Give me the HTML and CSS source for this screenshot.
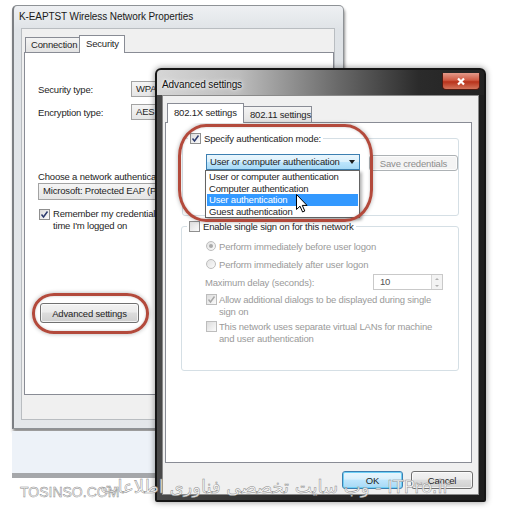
FILE: index.html
```html
<!DOCTYPE html>
<html lang="en">
<head>
    <meta charset="UTF-8">
    <meta name="viewport" content="width=device-width, initial-scale=1.0">
    <title>Advanced settings</title>
    <link rel="stylesheet" href="styles.css">
</head>
<body>
<div class="screen">

    <!-- wireless properties window, behind -->
    <div class="win back">
        <div class="titlebar">K-EAPTST Wireless Network Properties</div>
        <div class="client">
            <div class="tabs">
                <div class="tab">Connection</div>
                <div class="tab active">Security</div>
            </div>
            <div class="panel sec-panel">
                <div class="field">
                    <span class="label">Security type:</span>
                    <div class="combo">WPA2-Enterprise</div>
                </div>
                <div class="field">
                    <span class="label">Encryption type:</span>
                    <div class="combo">AES</div>
                </div>
                <p class="choose">Choose a network authentication method:</p>
                <div class="combo wide">Microsoft: Protected EAP (PEAP)</div>
                <div class="check-row remember">
                    <span class="box"><svg viewBox="0 0 9 9"><path d="M1.5 4.5 L3.5 7 L7.5 1.5" fill="none" stroke="#2c3b6e" stroke-width="1.5"/></svg></span>
                    <span>Remember my credentials for this connection each<br>time I'm logged on</span>
                </div>
                <button class="btn adv-btn">Advanced settings</button>
            </div>
        </div>
    </div>

    <div class="desk"></div>

    <!-- advanced settings dialog -->
    <div class="win front">
        <div class="titlebar">
            Advanced settings
            <span class="close"><svg viewBox="0 0 10 9"><path d="M2 1.5 L8 7.5 M8 1.5 L2 7.5" stroke="#fff" stroke-width="2.2"/></svg></span>
        </div>
        <div class="client">
            <div class="tabs">
                <div class="tab active">802.1X settings</div>
                <div class="tab">802.11 settings</div>
            </div>
            <div class="panel x-panel">
                <div class="group auth">
                    <div class="legend">
                        <span class="box"><svg viewBox="0 0 9 9"><path d="M1.5 4.5 L3.5 7 L7.5 1.5" fill="none" stroke="#2c3b6e" stroke-width="1.5"/></svg></span>
                        Specify authentication mode:
                    </div>
                    <div class="auth-row">
                        <div class="combo-wrap">
                            <div class="combo focus">User or computer authentication<i class="arrow"></i></div>
                            <ul class="dropdown">
                                <li>User or computer authentication</li>
                                <li>Computer authentication</li>
                                <li class="sel">User authentication</li>
                                <li>Guest authentication</li>
                            </ul>
                        </div>
                        <button class="btn disabled">Save credentials</button>
                    </div>
                </div>

                <div class="group sso">
                    <div class="legend">
                        <span class="box"></span>
                        Enable single sign on for this network
                    </div>
                    <div class="opt first"><span class="radio on"></span>Perform immediately before user logon</div>
                    <div class="opt"><span class="radio"></span>Perform immediately after user logon</div>
                    <div class="delay">
                        <span class="delay-label">Maximum delay (seconds):</span>
                        <div class="spin"><span>10</span><i class="spin-btns"><b class="up"></b><b class="down"></b></i></div>
                    </div>
                    <div class="check-row dim first-check">
                        <span class="box"><svg viewBox="0 0 9 9"><path d="M1.5 4.5 L3.5 7 L7.5 1.5" fill="none" stroke="#a8a8a8" stroke-width="1.5"/></svg></span>
                        <span>Allow additional dialogs to be displayed during single<br>sign on</span>
                    </div>
                    <div class="check-row dim">
                        <span class="box"></span>
                        <span>This network uses separate virtual LANs for machine<br>and user authentication</span>
                    </div>
                </div>
            </div>
            <div class="actions">
                <button class="btn default">OK</button>
                <button class="btn">Cancel</button>
            </div>
        </div>
    </div>

    <div class="mark mark-auth"></div>
    <div class="mark mark-adv"></div>

    <svg class="cursor" viewBox="0 0 12 19" width="12" height="19">
        <path d="M0.5 0.5 L0.5 15.5 L4 12.2 L6.6 18 L8.8 17 L6.3 11.4 L11 11.4 Z" fill="#fff" stroke="#000" stroke-width="1"/>
    </svg>

    <div class="wm wm-left">TOSINSO.COM</div>
    <div class="wm wm-fa" dir="rtl">ITPro.ir - وب سایت تخصصی فناوری اطلاعات</div>
</div>
</body>
</html>
```

FILE: styles.css
```css
* {
    box-sizing: border-box;
}
body {
    margin: 0;
    background: white;
    font-family: "Liberation Sans", Arial, sans-serif;
    font-size: 9.5px;
    letter-spacing: -0.18px;
    color: #1e1e1e;
}
.screen {
    position: relative;
    width: 507px;
    height: 515px;
    overflow: hidden;
}

/* windows */
.win {
    position: absolute;
    display: flex;
    flex-direction: column;
}
.titlebar {
    font-size: 10px;
    letter-spacing: -0.1px;
    white-space: nowrap;
}
.client {
    flex: 1;
    background: #f0f0f0;
    display: flex;
    flex-direction: column;
}
.tabs {
    display: flex;
    align-items: flex-end;
}
.tab {
    height: 15px;
    line-height: 14px;
    padding-left: 5px;
    border: 1px solid #898c95;
    border-bottom: none;
    background: linear-gradient(#f4f4f4, #e3e3e3);
    white-space: nowrap;
}
.tab.active {
    position: relative;
    z-index: 1;
    background: white;
    margin-bottom: -1px;
}
.panel {
    background: white;
    border: 1px solid #898c95;
}

/* back window */
.back {
    left: 12px;
    top: 5px;
    width: 332px;
    height: 424px;
    background: linear-gradient(#eef0f3, #dfe3e7 24px, #e4e7ea);
    border: 1px solid #8e9296;
    border-left: 2px solid #7c7f83;
    border-radius: 5px 5px 0 0;
    box-shadow: 1px 3px 3px rgba(0, 0, 0, 0.45);
}
.back .titlebar {
    height: 22px;
    line-height: 22px;
    padding-left: 5px;
    color: #1a1a1a;
}
.back .client {
    margin: 0 8px 8px 7px;
    border: 1px solid #b9bdc1;
    padding: 6px 0 0 2px;
}
.back .tab {
    width: 55px;
    margin-left: 1px;
}
.back .tab.active {
    width: 46px;
    height: 18px;
    line-height: 15px;
    padding-left: 6px;
    margin-left: -1px;
}
.sec-panel {
    height: 343px;
    padding: 28px 0 0 13px;
}
.field {
    display: flex;
    align-items: center;
    height: 16px;
}
.field + .field {
    margin-top: 7px;
}
.label {
    width: 93px;
}
.combo {
    height: 16px;
    width: 190px;
    line-height: 14px;
    padding-left: 4px;
    border: 1px solid #a3a3a3;
    background: linear-gradient(#f5f5f5, #e5e5e5);
    white-space: nowrap;
    overflow: hidden;
}
.choose {
    margin: 51px 0 0;
    line-height: 12px;
    white-space: nowrap;
}
.combo.wide {
    width: 260px;
    height: 17px;
}
.check-row {
    display: flex;
    align-items: flex-start;
    line-height: 12px;
    white-space: nowrap;
}
.remember {
    margin-top: 8px;
}
.box {
    flex: none;
    width: 11px;
    height: 11px;
    margin: 1px 3px 0 1px;
    border: 1px solid #8f8f8f;
    background: linear-gradient(135deg, #dcdcdc, #fbfbfb);
    display: flex;
}
.box svg {
    width: 9px;
    height: 9px;
}
.btn {
    font: inherit;
    letter-spacing: inherit;
    color: #1e1e1e;
    height: 18px;
    padding: 0;
    border: 1px solid #707070;
    border-radius: 3px;
    background: linear-gradient(#f2f2f2 0, #ebebeb 45%, #dddddd 50%, #cfcfcf);
    box-shadow: inset 0 0 0 1px rgba(255, 255, 255, 0.7);
}
.adv-btn {
    display: block;
    margin: 71px 0 0 2px;
    width: 99px;
    height: 20px;
}

.desk {
    position: absolute;
    left: 12px;
    top: 431px;
    width: 146px;
    height: 47px;
    background: #edf2f8;
    border-bottom: 5px solid #a5a7aa;
}

/* front window */
.front {
    left: 155px;
    top: 68px;
    width: 331px;
    height: 434px;
    border: 2px solid #161616;
    border-radius: 6px 6px 2px 2px;
    background: linear-gradient(90deg, #4a4a4a, #2a2a2a 40%, #1e1e1e);
    box-shadow: 0 0 6px rgba(0, 0, 0, 0.45);
}
.front .titlebar {
    position: relative;
    height: 25px;
    padding: 8px 0 0 5px;
    line-height: 14px;
    color: #111;
    text-shadow: 0 0 6px #fff, 0 0 3px #fff;
    background: linear-gradient(90deg, #d6d6d6 0, #bdbdbd 25%, #6a6a6a 55%, #2b2b2b 80%, #222);
    border-radius: 4px 4px 0 0;
}
.close {
    position: absolute;
    right: 4px;
    top: 3px;
    width: 38px;
    height: 17px;
    border: 1px solid #4d1a12;
    border-top: none;
    border-radius: 0 0 4px 4px;
    background: linear-gradient(#e49a8a, #cf5a43 45%, #b8321b 55%, #d3735a);
    display: flex;
    align-items: center;
    justify-content: center;
}
.close svg {
    width: 10px;
    height: 9px;
}
.front .client {
    margin: 0 5px 5px;
    border: 1px solid #8a8a8a;
    padding: 7px 0 0 2px;
}
.front .tab {
    height: 16px;
    line-height: 15px;
    padding-left: 6px;
}
.front .tab.active {
    width: 77px;
    height: 20px;
    line-height: 18px;
    margin-left: 2px;
}
.front .tab:not(.active) {
    width: 69px;
    margin-left: -1px;
}
.x-panel {
    width: 307px;
    height: 341px;
    padding-top: 15px;
}
.group {
    border: 1px solid #d5dfe5;
    border-radius: 3px;
}
.legend {
    display: flex;
    align-items: center;
    width: fit-content;
    height: 12px;
    margin: -7px 0 0 5px;
    padding: 0 2px;
    background: white;
    white-space: nowrap;
}
.legend .box {
    margin: 0 3px 0 0;
}
.auth {
    margin-left: 16px;
    width: 277px;
    height: 78px;
}
.auth-row {
    display: flex;
    align-items: flex-start;
    margin: 10px 0 0 23px;
}
.combo-wrap {
    position: relative;
}
.combo.focus {
    position: relative;
    width: 154px;
    padding-left: 3px;
    border-color: #3c7fb1;
    background: linear-gradient(#eaf6fd, #d9f0fc 50%, #bee6fd 50%, #a7d9f5);
}
.arrow {
    position: absolute;
    right: 4px;
    top: 5px;
    border: 3.5px solid transparent;
    border-top: 4px solid #1e1e1e;
}
.dropdown {
    position: absolute;
    left: -1px;
    top: 16px;
    width: 155px;
    margin: 0;
    padding: 0 1px;
    list-style: none;
    background: white;
    border: 1px solid #646464;
    box-shadow: 2px 2px 3px rgba(0, 0, 0, 0.3);
}
.dropdown li {
    height: 11.5px;
    line-height: 11.5px;
    padding-left: 2px;
    white-space: nowrap;
}
.dropdown li.sel {
    background: #3399ff;
    color: white;
}
.btn.disabled {
    margin: 1px 0 0 9px;
    width: 89px;
    height: 16px;
    color: #8d8d8d;
    border-color: #adb2b5;
    background: #f4f4f4;
}
.sso {
    margin: 10px 0 0 15px;
    width: 278px;
    height: 145px;
    padding-left: 24px;
}
.sso .legend {
    margin-left: -19px;
}
.opt {
    display: flex;
    align-items: center;
    height: 12px;
    margin-top: 6px;
    color: #9a9a9a;
    white-space: nowrap;
}
.opt.first {
    margin-top: 8px;
}
.radio {
    width: 10px;
    height: 10px;
    margin-right: 3px;
    border: 1px solid #bdbdbd;
    border-radius: 50%;
    background: linear-gradient(135deg, #e2e2e2, #fafafa);
    display: flex;
    align-items: center;
    justify-content: center;
}
.radio.on::after {
    content: "";
    width: 4px;
    height: 4px;
    border-radius: 50%;
    background: #a9a9a9;
}
.delay {
    display: flex;
    align-items: center;
    margin-top: 4px;
    color: #9a9a9a;
}
.delay-label {
    width: 168px;
    margin-left: -1px;
    white-space: nowrap;
}
.spin {
    display: flex;
    width: 70px;
    height: 16px;
    border: 1px solid #c9c9c9;
    background: white;
}
.spin span {
    flex: 1;
    line-height: 14px;
    padding-left: 6px;
    color: #555;
}
.spin-btns {
    width: 11px;
    display: flex;
    flex-direction: column;
    border-left: 1px solid #d6d6d6;
}
.spin-btns b {
    flex: 1;
    display: flex;
    align-items: center;
    justify-content: center;
    background: #f3f3f3;
}
.spin-btns b::after {
    content: "";
    border: 2px solid transparent;
}
.spin-btns .up::after {
    border-bottom: 2px solid #b0b0b0;
    margin-top: -2px;
}
.spin-btns .down::after {
    border-top: 2px solid #b0b0b0;
    margin-bottom: -2px;
}
.check-row.dim {
    color: #9a9a9a;
    margin-top: 3px;
}
.check-row.dim .box {
    margin: 0 2px 0 0;
    border-color: #bdbdbd;
}
.first-check {
    margin-top: 4px !important;
}
.actions {
    display: flex;
    justify-content: flex-end;
    gap: 8px;
    margin-top: 8px;
    padding-right: 5px;
}
.actions .btn {
    width: 62px;
    height: 18px;
}
.btn.default {
    width: 61px;
    border-color: #3c7fb1;
    background: linear-gradient(#eaf6fd, #d9f0fc 45%, #bee6fd 50%, #a7d9f5);
    box-shadow: inset 0 0 0 1px #6fd0f6;
}

/* red annotation rings */
.mark {
    position: absolute;
    border: 3px solid #b34a3c;
    box-shadow: 0 0 4px rgba(0, 0, 0, 0.3), inset 0 0 3px rgba(0, 0, 0, 0.2);
}
.mark-auth {
    left: 178px;
    top: 124px;
    width: 195px;
    height: 98px;
    border-radius: 28px / 32px;
}
.mark-adv {
    left: 32px;
    top: 293px;
    width: 117px;
    height: 41px;
    border-radius: 22px / 20px;
}

.cursor {
    position: absolute;
    left: 296px;
    top: 194px;
}

/* watermarks */
.wm {
    position: absolute;
    white-space: nowrap;
    letter-spacing: 0;
    color: rgba(255, 255, 255, 0.9);
    -webkit-text-stroke: 0.5px #8a8a8a;
}
.wm-left {
    left: 20px;
    top: 484px;
    font-family: "Liberation Sans", Arial, sans-serif;
    font-size: 14px;
}
.wm-fa {
    right: 57px;
    top: 476px;
    font-family: "DejaVu Sans", sans-serif;
    font-size: 18px;
}
```
